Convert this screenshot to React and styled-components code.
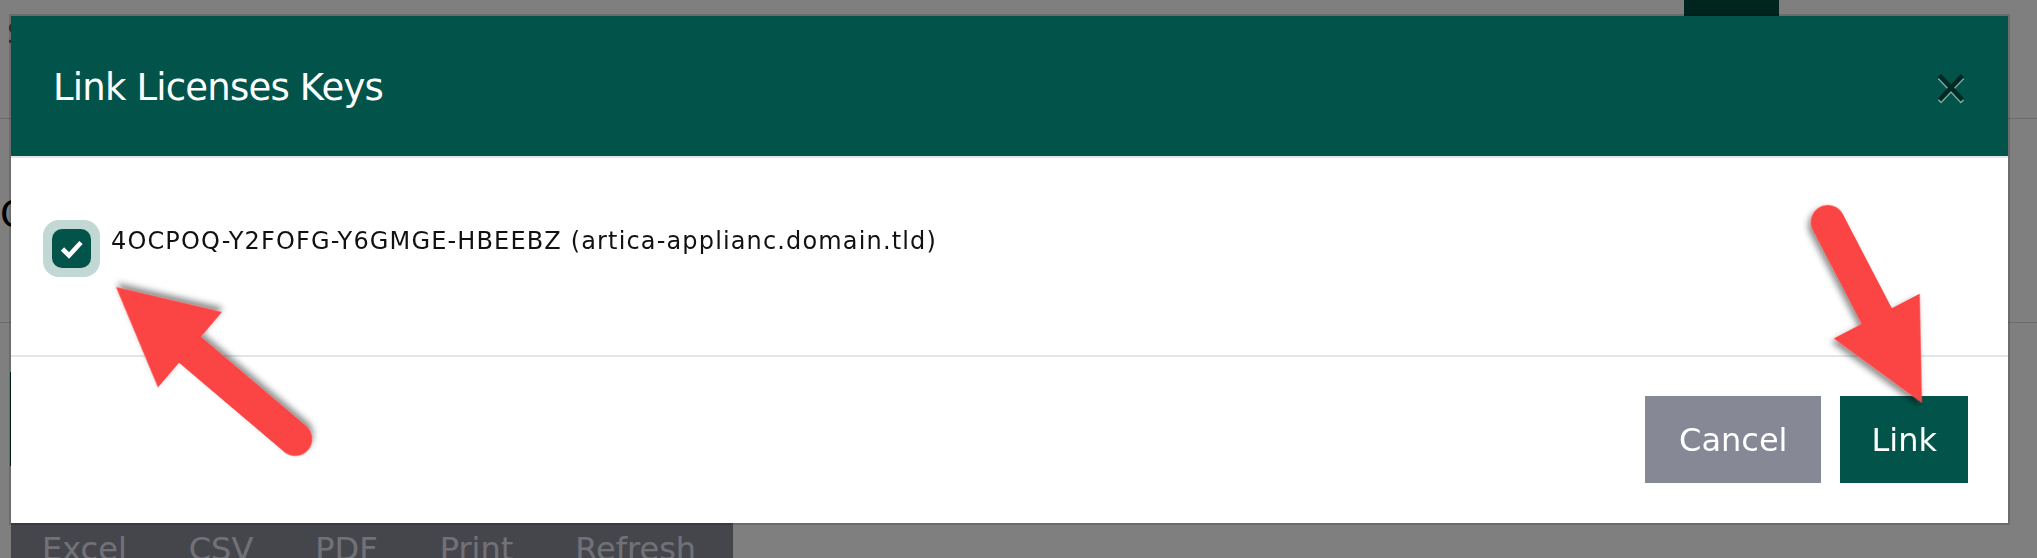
import React from "react";
import styled, { createGlobalStyle } from "styled-components";

const GlobalStyle = createGlobalStyle`
  html, body {
    margin: 0;
    padding: 0;
    background: #ffffff;
    overflow: hidden;
  }
  body {
    font-family: "DejaVu Sans", "Liberation Sans", sans-serif;
  }
`;

const App = () => {
  return (
    <>
      <GlobalStyle />
      <Page>
        <TopBar>
          <Brand>Support</Brand>
          <TopButton />
        </TopBar>
        <HeadingSection>
          <Heading>Cluster</Heading>
        </HeadingSection>
        <Panel />
        <ExportBar>
          <ExportButton>Excel</ExportButton>
          <ExportButton>CSV</ExportButton>
          <ExportButton>PDF</ExportButton>
          <ExportButton>Print</ExportButton>
          <ExportButton>Refresh</ExportButton>
        </ExportBar>
      </Page>

      <Overlay>
        <Modal>
          <ModalHeader>
            <Title>Link Licenses Keys</Title>
            <CloseButton aria-label="Close">
              <svg width="26" height="30" viewBox="0 0 26 30">
                <g opacity="0.5" strokeWidth="4.6" strokeLinecap="butt">
                  <g stroke="#ffffff" transform="translate(0 2)">
                    <line x1="1.5" y1="1.5" x2="24.5" y2="26" />
                    <line x1="24.5" y1="1.5" x2="1.5" y2="26" />
                  </g>
                  <g stroke="#000000">
                    <line x1="1.5" y1="1.5" x2="24.5" y2="26" />
                    <line x1="24.5" y1="1.5" x2="1.5" y2="26" />
                  </g>
                </g>
              </svg>
            </CloseButton>
          </ModalHeader>

          <ModalBody>
            <CheckHalo>
              <CheckBox>
                <svg width="39" height="39" viewBox="0 0 39 39">
                  <polyline
                    points="10.5,20 17,26.5 29,13.5"
                    fill="none"
                    stroke="#ffffff"
                    strokeWidth="4.6"
                  />
                </svg>
              </CheckBox>
            </CheckHalo>
            <KeyLabel>4OCPOQ-Y2FOFG-Y6GMGE-HBEEBZ (artica-applianc.domain.tld)</KeyLabel>
          </ModalBody>

          <ModalFooter>
            <Button $variant="cancel">Cancel</Button>
            <Button $variant="primary">Link</Button>
          </ModalFooter>

          <Arrows viewBox="0 0 1997 507">
            <defs>
              <filter id="arrowShadow" x="-20%" y="-20%" width="140%" height="140%">
                <feDropShadow dx="2" dy="4" stdDeviation="3" floodColor="#000" floodOpacity="0.45" />
              </filter>
            </defs>
            <Arrow tipX={105} tipY={271} angle={-139.7} length={235} head={97} width={99} shaft={34} />
            <Arrow tipX={1911} tipY={387} angle={62.5} length={204} head={98} width={97} shaft={34} />
          </Arrows>
        </Modal>
      </Overlay>
    </>
  );
};

const Arrow = ({ tipX, tipY, angle, length, head, width, shaft }) => {
  const w = width / 2;
  const s = shaft / 2;
  const d = `M0,0 L${-head},${-w} L${-head},${-s} L${-length},${-s} A${s},${s} 0 0 0 ${-length},${s} L${-head},${s} L${-head},${w} Z`;
  return (
    <path
      d={d}
      fill="#fb4545"
      filter="url(#arrowShadow)"
      transform={`translate(${tipX} ${tipY}) rotate(${angle})`}
    />
  );
};

const Page = styled.div`
  width: 2037px;
  height: 558px;
  overflow: hidden;
  background: #ffffff;
`;

const TopBar = styled.div`
  height: 118px;
  display: flex;
  justify-content: space-between;
  align-items: flex-start;
  border-bottom: 1px solid #d6d6d6;
`;

const Brand = styled.div`
  padding: 16px 0 0 7px;
  font-size: 30px;
  color: #6a6a6a;
`;

const TopButton = styled.div`
  width: 95px;
  height: 52px;
  margin-right: 258px;
  background: #004a3e;
`;

const HeadingSection = styled.div`
  height: 204px;
  box-sizing: border-box;
  padding-top: 76px;
  border-bottom: 1px solid #d6d6d6;
`;

const Heading = styled.h1`
  margin: 0;
  font-size: 38px;
  font-weight: 400;
  line-height: 1;
  color: #000000;
`;

const Panel = styled.div`
  margin: 49px 0 0 10px;
  width: 400px;
  height: 94px;
  background: #004a3e;
`;

const ExportBar = styled.div`
  display: flex;
  width: 722px;
  margin: 38px 0 0 11px;
  height: 90px;
  background: #8a8c98;
`;

const ExportButton = styled.div`
  padding: 29px 31px 0;
  font-size: 32px;
  line-height: 1;
  color: #e2e3ee;
`;

const Overlay = styled.div`
  position: fixed;
  inset: 0;
  background: rgba(0, 0, 0, 0.5);
  display: flex;
  align-items: flex-start;
  padding: 16px 0 0 11px;
`;

const Modal = styled.div`
  position: relative;
  width: 1997px;
  background: #ffffff;
  box-shadow: 0 0 0 2px rgba(0, 0, 0, 0.15);
`;

const ModalHeader = styled.div`
  height: 140px;
  display: flex;
  align-items: center;
  justify-content: space-between;
  padding: 0 44px 0 42px;
  background: #02544a;
  border-bottom: 2px solid #e2e6ea;
`;

const Title = styled.h4`
  margin: 2px 0 0;
  font-size: 37px;
  font-weight: 400;
  letter-spacing: -0.8px;
  color: #ffffff;
`;

const CloseButton = styled.button`
  display: flex;
  padding: 0;
  margin-top: 6px;
  border: none;
  background: transparent;
  cursor: pointer;
`;

const ModalBody = styled.div`
  height: 197px;
  box-sizing: border-box;
  padding: 62px 32px 0;
  display: flex;
  align-items: flex-start;
  gap: 11px;
`;

const CheckHalo = styled.div`
  width: 57px;
  height: 57px;
  box-sizing: border-box;
  padding: 9px;
  border-radius: 16px;
  background: #c1d8d4;
`;

const CheckBox = styled.div`
  width: 39px;
  height: 39px;
  border-radius: 10px;
  background: #02544a;
  display: flex;
`;

const KeyLabel = styled.span`
  margin-top: 7px;
  font-size: 24px;
  line-height: 1.2;
  letter-spacing: 1.15px;
  color: #111111;
`;

const ModalFooter = styled.div`
  display: flex;
  justify-content: flex-end;
  gap: 19px;
  padding: 39px 40px 40px;
  border-top: 2px solid #e1e6e9;
`;

const Button = styled.button`
  height: 87px;
  padding: ${(p) => (p.$variant === "primary" ? "0 31px" : "0 34px")};
  border: none;
  border-radius: 0;
  font-family: "DejaVu Sans", "Liberation Sans", sans-serif;
  font-size: 32px;
  color: #ffffff;
  background: ${(p) => (p.$variant === "primary" ? "#02544a" : "#868896")};
  cursor: pointer;
`;

const Arrows = styled.svg`
  position: absolute;
  left: 0;
  top: 0;
  width: 1997px;
  height: 507px;
  overflow: visible;
  pointer-events: none;
`;

export default App;
